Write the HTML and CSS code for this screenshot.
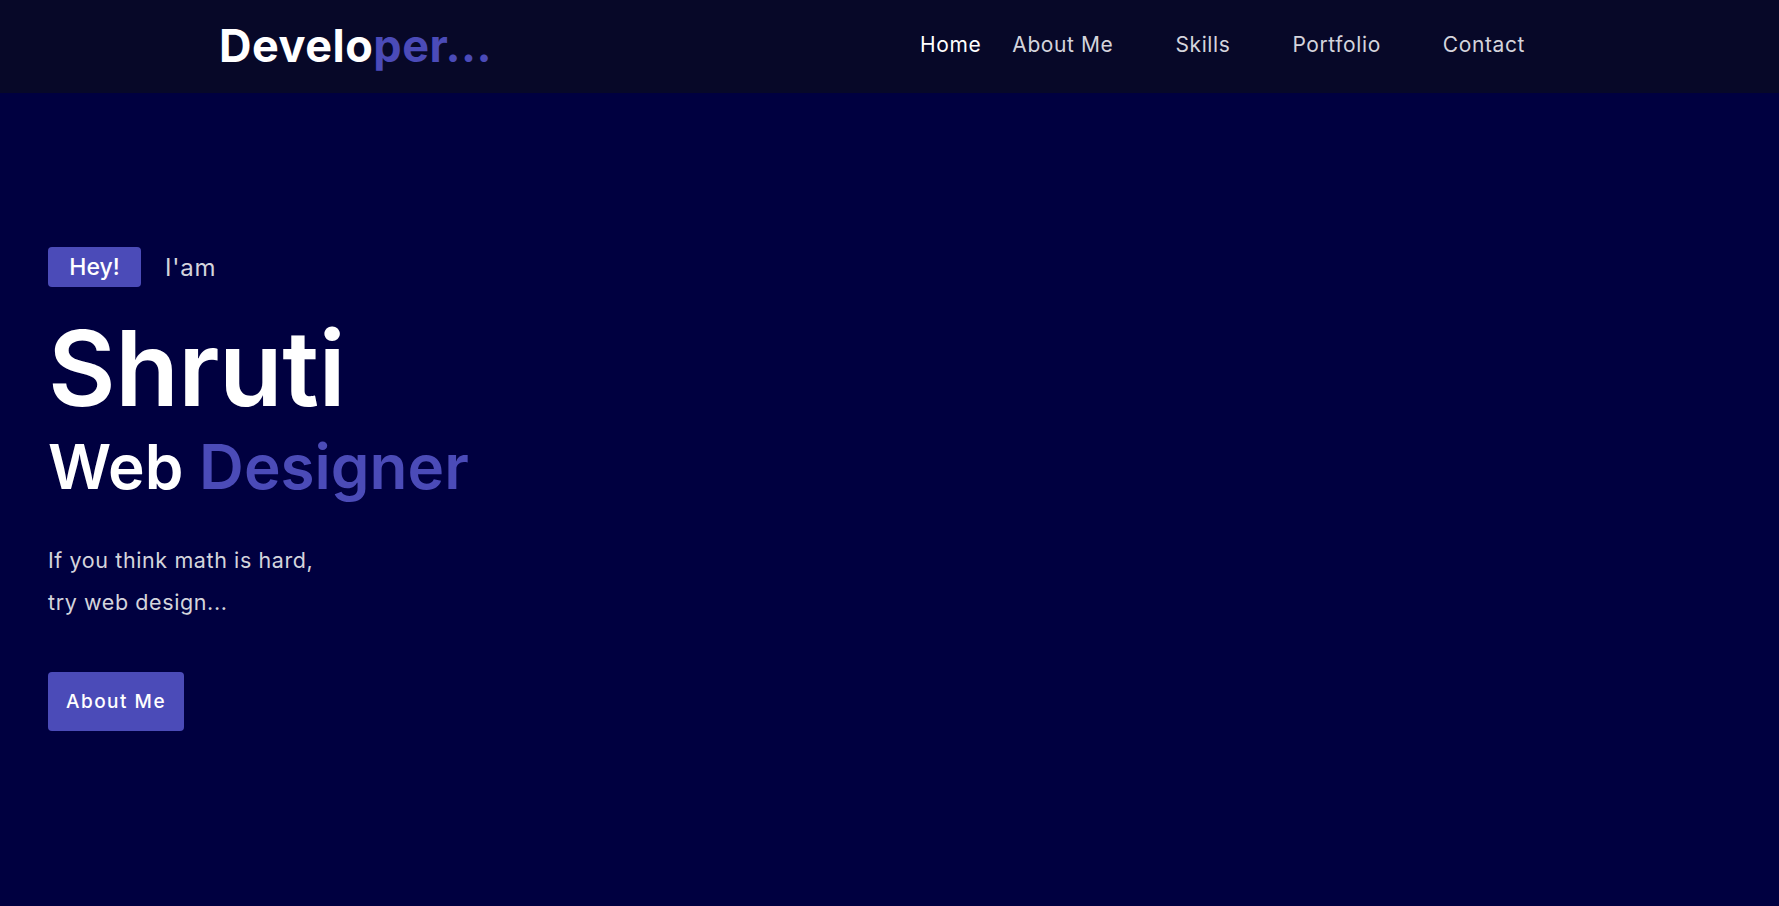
FILE: index.html
```html
<!DOCTYPE html>
<html lang="en">
<head>
<meta charset="utf-8">
<title>Developer</title>
<link rel="stylesheet" href="styles.css">
</head>
<body>
<header class="topbar">
  <a class="logo" href="#">Develo<span class="accent">per...</span></a>
  <nav class="nav">
    <a class="nav-link nav-link--first" href="#">Home</a>
    <a class="nav-link" href="#">About Me</a>
    <a class="nav-link" href="#">Skills</a>
    <a class="nav-link" href="#">Portfolio</a>
    <a class="nav-link" href="#">Contact</a>
  </nav>
</header>
<main class="hero">
  <div class="hero-content">
    <div class="greeting">
      <span class="badge">Hey!</span>
      <span class="iam">I'am</span>
    </div>
    <h1 class="name">Shruti</h1>
    <h2 class="role">Web <span class="accent">Designer</span></h2>
    <p class="tagline">If you think math is hard,<br>try web design...</p>
    <a class="btn" href="#">About Me</a>
  </div>
</main>
</body>
</html>
```
FILE: styles.css
```css
* { box-sizing: border-box; }
html, body { margin: 0; padding: 0; }
body {
  font-family: "Inter", "Open Sans", sans-serif;
  background: #000040;
  color: #fff;
  height: 906px;
  overflow: hidden;
}
a { text-decoration: none; color: inherit; }
.accent { color: #4b4bb8; }

.topbar {
  height: 93px;
  background: #070828;
  display: flex;
  align-items: center;
  padding: 0 254px 0 219px;
}
.logo {
  font-size: 45px;
  font-weight: 700;
  color: #fff;
  letter-spacing: 0.5px;
  padding-bottom: 2px;
}
.nav {
  margin-left: auto;
  display: flex;
  align-items: center;
  gap: 62px;
  padding-bottom: 5px;
}
.nav-link {
  font-size: 21px;
  letter-spacing: 0.6px;
  color: #d4d4dc;
}
.nav-link--first { color: #fff; margin-right: -31px; }

.hero {
  height: 813px;
  padding: 154px 48px 0;
}
.greeting {
  display: flex;
  align-items: center;
  gap: 24px;
}
.badge {
  background: #4b4bb8;
  color: #fff;
  border-radius: 4px;
  font-size: 23px;
  font-weight: 500;
  height: 40px;
  width: 93px;
  display: inline-flex;
  align-items: center;
  justify-content: center;
}
.iam {
  font-size: 24px;
  letter-spacing: 0.8px;
  color: #d4d4dc;
}
.name {
  margin: 29px 0 0;
  font-size: 104px;
  font-weight: 600;
  line-height: 1;
  letter-spacing: -0.5px;
}
.role {
  margin: 16px 0 0;
  font-size: 62px;
  font-weight: 600;
  line-height: 1;
}
.tagline {
  margin: 41px 0 0;
  font-size: 21.5px;
  letter-spacing: 0.6px;
  line-height: 42px;
  color: #d4d4dc;
}
.btn {
  display: inline-flex;
  align-items: center;
  justify-content: center;
  margin-top: 49px;
  width: 136px;
  height: 59px;
  background: #4b4bb8;
  border-radius: 4px;
  font-size: 19px;
  font-weight: 500;
  letter-spacing: 1.5px;
}
```
